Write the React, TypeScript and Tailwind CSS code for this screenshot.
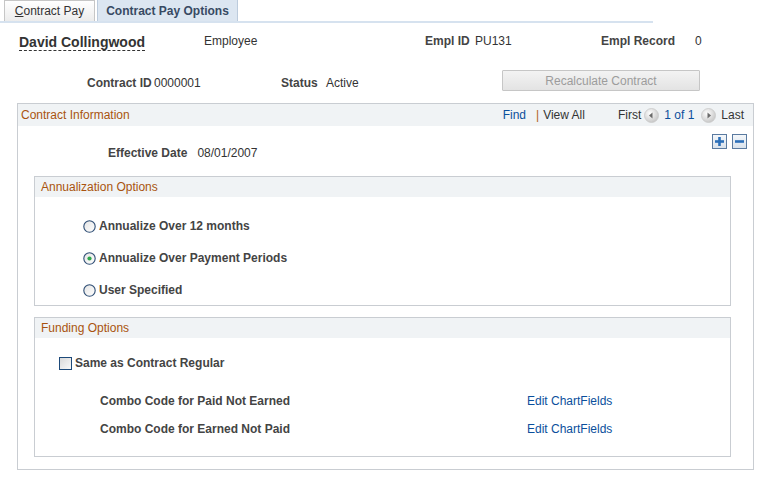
import React from "react";

const Radio = ({ checked }: { checked?: boolean }) => (
  <svg width="13" height="13" viewBox="0 0 13 13" className="shrink-0">
    <defs>
      <linearGradient id={checked ? "rg1" : "rg0"} x1="0" y1="0" x2="1" y2="1">
        <stop offset="0" stopColor="#e4e4e4" />
        <stop offset="1" stopColor="#ffffff" />
      </linearGradient>
    </defs>
    <circle cx="6.5" cy="6.5" r="5.7" fill={`url(#${checked ? "rg1" : "rg0"})`} stroke="#2e4d74" strokeWidth="1.1" />
    {checked && <circle cx="6.5" cy="6.5" r="2.1" fill="#2fa84c" />}
  </svg>
);

const Checkbox = () => (
  <div className="w-[13px] h-[13px] border border-[#1d4a7a] bg-[linear-gradient(135deg,#d9d9d9,#f9f9f9)] shrink-0" />
);

const NavArrow = ({ dir }: { dir: "l" | "r" }) => (
  <svg width="15" height="15" viewBox="0 0 15 15" className="shrink-0">
    <defs>
      <radialGradient id={`na${dir}`} cx="0.4" cy="0.35" r="0.7">
        <stop offset="0" stopColor="#ffffff" />
        <stop offset="1" stopColor="#c4c4c4" />
      </radialGradient>
    </defs>
    <circle cx="7.5" cy="7.5" r="7" fill={`url(#na${dir})`} stroke="#c9c9c9" strokeWidth="0.8" />
    {dir === "l" ? (
      <polygon points="5,7.5 8.5,4.5 8.5,10.5" fill="#6a6a6a" />
    ) : (
      <polygon points="10,7.5 6.5,4.5 6.5,10.5" fill="#6a6a6a" />
    )}
  </svg>
);

const PmButton = ({ minus }: { minus?: boolean }) => (
  <div className="w-[15px] h-[15px] border border-[#5a7aa0] bg-[linear-gradient(180deg,#f4f7fa,#d9e2ec)] flex items-center justify-center">
    <svg width="11" height="11" viewBox="0 0 11 11">
      <rect x="1" y="4.2" width="9" height="2.6" fill="#2c6fb9" />
      {!minus && <rect x="4.2" y="1" width="2.6" height="9" fill="#2c6fb9" />}
    </svg>
  </div>
);

export default function App() {
  const label = "font-bold text-[#444] text-[12px] leading-[14px]";
  const value = "text-[#333] text-[12px] leading-[14px]";
  const groupHeader = "text-[#a9530f] text-[12px] leading-[14px]";
  return (
    <div className="w-[760px] h-[478px] bg-white overflow-hidden leading-[14px] font-['Liberation_Sans',Arial,sans-serif]">
      {/* Tabs */}
      <div className="w-[653px] h-[23px] border-b-2 border-[#d6e2ef] flex items-end pl-[4px] gap-[2px]">
        <div className="h-[21px] w-[91px] border border-b-0 border-[#c6c6c6] bg-[linear-gradient(180deg,#ffffff,#ececec)] flex items-center justify-center text-[12px] text-[#333]">
          <span>
            <span className="underline">C</span>ontract Pay
          </span>
        </div>
        <div className="h-[22px] w-[141px] border border-b-0 border-[#bccbdc] bg-[#dce6f1] flex items-center justify-center text-[12px] font-bold text-[#384a63]">
          Contract Pay Options
        </div>
      </div>

      {/* Row 1 */}
      <div className="flex items-start mt-[11px]">
        <div className="w-[204px] pl-[19px] flex">
          <span className="block text-[14px] leading-[16px] font-bold text-[#333] border-b border-dashed border-[#333]">
            David Collingwood
          </span>
        </div>
        <div className={`${value} w-[221px]`}>Employee</div>
        <div className={`${label} w-[50px]`}>Empl ID</div>
        <div className={`${value} w-[126px]`}>PU131</div>
        <div className={`${label} w-[94px]`}>Empl Record</div>
        <div className={value}>0</div>
      </div>

      {/* Row 2 */}
      <div className="flex items-end h-[21px] mt-[19px]">
        <div className={`${label} ml-[87px] w-[67px] mb-[1px]`}>Contract ID</div>
        <div className={`${value} w-[127px] mb-[1px]`}>0000001</div>
        <div className={`${label} w-[45px] mb-[1px]`}>Status</div>
        <div className={`${value} w-[176px] mb-[1px]`}>Active</div>
        <div className="self-stretch w-[198px] border border-[#c6c6c6] rounded-[1px] bg-[linear-gradient(180deg,#f3f3f3,#e3e3e3)] flex items-center justify-center text-[12px] text-[#9c9c9c]">
          Recalculate Contract
        </div>
      </div>

      {/* Contract Information */}
      <div className="ml-[17px] mt-[12px] w-[737px] h-[367px] border border-[#c9cdd2]">
        <div className="h-[22px] bg-[#f0f3f5] flex items-center justify-between pl-[3px] pr-[9px]">
          <div className={groupHeader}>Contract Information</div>
          <div className="flex items-center text-[12px]">
            <span className="text-[#0b4f9c]">Find</span>
            <span className="text-[#b0641c] ml-[10px]">|</span>
            <span className="text-[#333] ml-[4px]">View All</span>
            <span className="text-[#333] ml-[33px]">First</span>
            <span className="ml-[3px] flex"><NavArrow dir="l" /></span>
            <span className="text-[#0b4f9c] ml-[5px]">1 of 1</span>
            <span className="ml-[7px] flex"><NavArrow dir="r" /></span>
            <span className="text-[#333] ml-[5px]">Last</span>
          </div>
        </div>

        <div className="flex justify-end gap-[5px] pr-[6px] mt-[8px] h-[15px]">
          <PmButton />
          <PmButton minus />
        </div>

        <div className="flex items-center h-[14px] mt-[-3px] pl-[90px] gap-[10px]">
          <div className={label}>Effective Date</div>
          <div className={value}>08/01/2007</div>
        </div>

        {/* Annualization Options */}
        <div className="ml-[16px] mt-[16px] w-[697px] h-[130px] border border-[#c9cdd2]">
          <div className="h-[20px] bg-[#f0f3f5] flex items-center pl-[6px]">
            <div className={groupHeader}>Annualization Options</div>
          </div>
          <div className="flex flex-col pl-[48px]">
            <div className="flex items-center gap-[3px] h-[14px] mt-[22px]">
              <Radio />
              <span className={label}>Annualize Over 12 months</span>
            </div>
            <div className="flex items-center gap-[3px] h-[14px] mt-[18px]">
              <Radio checked />
              <span className={label}>Annualize Over Payment Periods</span>
            </div>
            <div className="flex items-center gap-[3px] h-[14px] mt-[18px]">
              <Radio />
              <span className={label}>User Specified</span>
            </div>
          </div>
        </div>

        {/* Funding Options */}
        <div className="ml-[16px] mt-[11px] w-[697px] h-[140px] border border-[#c9cdd2]">
          <div className="h-[20px] bg-[#f0f3f5] flex items-center pl-[6px]">
            <div className={groupHeader}>Funding Options</div>
          </div>
          <div className="flex items-center gap-[3px] h-[14px] mt-[18px] pl-[24px]">
            <Checkbox />
            <span className={label}>Same as Contract Regular</span>
          </div>
          <div className="flex items-center h-[14px] mt-[24px] pl-[65px]">
            <span className={`${label} w-[427px]`}>Combo Code for Paid Not Earned</span>
            <span className="text-[12px] leading-[14px] text-[#0b4f9c]">Edit ChartFields</span>
          </div>
          <div className="flex items-center h-[14px] mt-[14px] pl-[65px]">
            <span className={`${label} w-[427px]`}>Combo Code for Earned Not Paid</span>
            <span className="text-[12px] leading-[14px] text-[#0b4f9c]">Edit ChartFields</span>
          </div>
        </div>
      </div>
    </div>
  );
}
